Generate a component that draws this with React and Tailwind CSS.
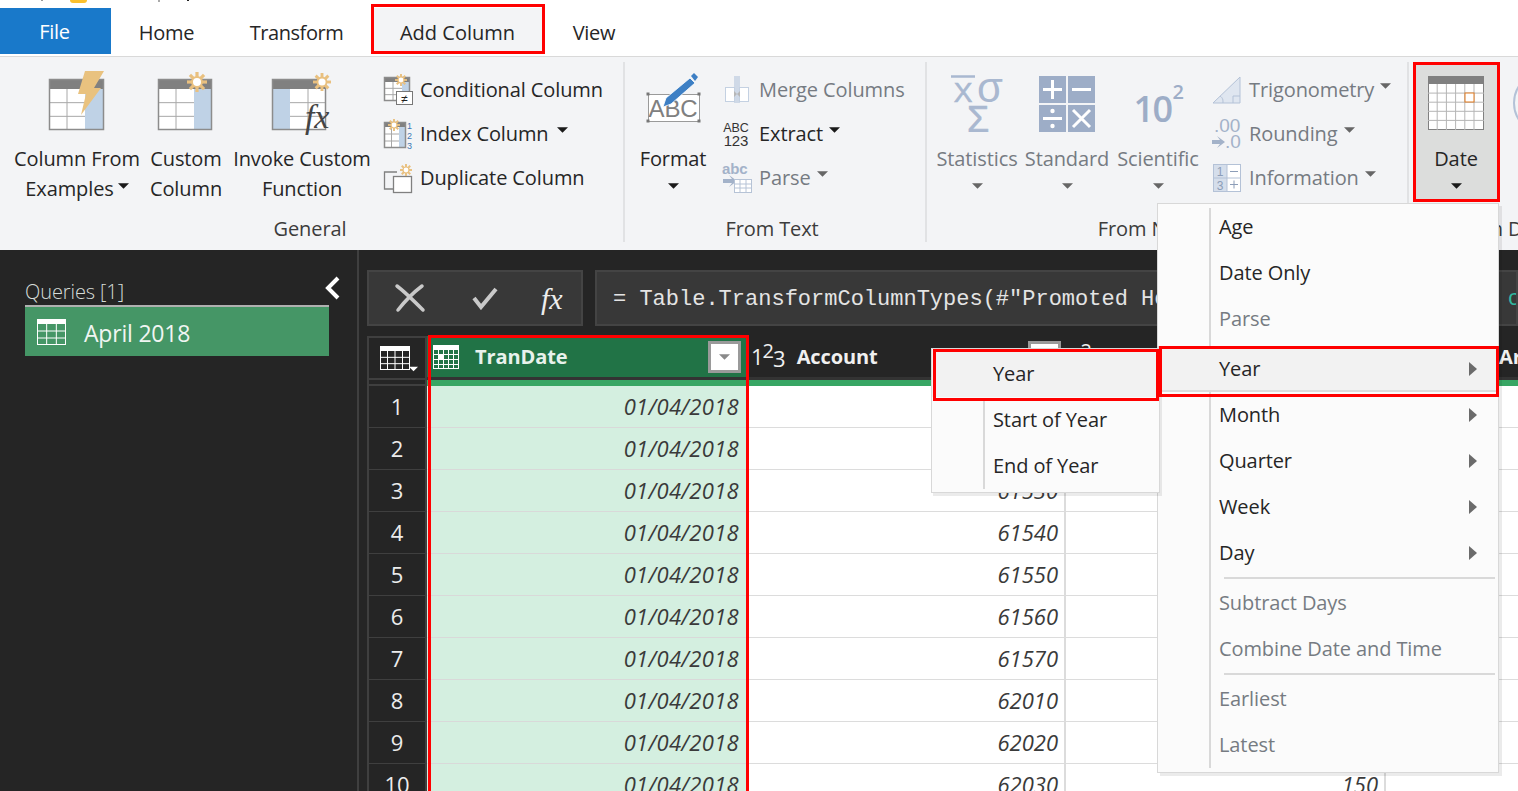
const ACCOUNTS = ['61510', '61520', '61530', '61540', '61550', '61560', '61570', '62010', '62020', '62030'];
const TEXT_DARK = 'text-[#262626]';
const TEXT_OFF = 'text-[#767b82]';

function Caret({ color = '#1a1a1a', className = '' }) {
  return (
    <svg width="11" height="6" viewBox="0 0 12 6" className={className}>
      <path d="M0 0h12L6 6z" fill={color} />
    </svg>
  );
}

function Sun({ cx, cy, r }) {
  const spokes = [0, 45, 90, 135];
  return (
    <g stroke="#e9c07f">
      {spokes.map((a) => {
        const dx = Math.cos((a * Math.PI) / 180) * r;
        const dy = Math.sin((a * Math.PI) / 180) * r;
        return <line key={a} x1={cx - dx} y1={cy - dy} x2={cx + dx} y2={cy + dy} strokeWidth={r * 0.32} />;
      })}
      <circle cx={cx} cy={cy} r={r * 0.5} fill="#fff" strokeWidth={r * 0.2} />
    </g>
  );
}

// table with a grey header and one blue column
function Sheet({ x, y, w, h, head, blue, blueW, rows = 3, cols = 2, strong = '#8c8c8c' }) {
  const gridX = blue === 'left' ? x + blueW : x;
  const gridW = w - blueW;
  const lines = [];
  for (let i = 1; i < rows; i++) {
    const ly = y + head + ((h - head) / rows) * i;
    lines.push(<line key={'r' + i} x1={gridX} y1={ly} x2={gridX + gridW} y2={ly} stroke="#a8a8a8" />);
  }
  for (let i = 1; i < cols; i++) {
    const lx = gridX + (gridW / cols) * i;
    lines.push(<line key={'c' + i} x1={lx} y1={y + head} x2={lx} y2={y + h} stroke="#a8a8a8" />);
  }
  return (
    <g>
      <rect x={x} y={y} width={w} height={h} fill="#fff" />
      <rect x={blue === 'left' ? x : x + w - blueW} y={y} width={blueW} height={h} fill="#bfd2e6" />
      {lines}
      <rect x={x} y={y} width={w} height={head} fill="#808080" />
      <rect x={x + 0.5} y={y + 0.5} width={w - 1} height={h - 1} fill="none" stroke={strong} strokeWidth="1.5" />
    </g>
  );
}

function FromExamplesIcon() {
  return (
    <svg width="58" height="62" viewBox="0 0 58 62">
      <Sheet x={1} y={9} w={55} h={51} head={10} blue="right" blueW={19} />
      <path d="M37 1h19L46 18h7L33 45l5-21h-8z" fill="#e9c27f" />
    </svg>
  );
}

function CustomIcon() {
  return (
    <svg width="58" height="62" viewBox="0 0 58 62">
      <Sheet x={1} y={9} w={54} h={51} head={10} blue="right" blueW={18} />
      <Sun cx={40} cy={12} r={10} />
    </svg>
  );
}

function InvokeIcon() {
  return (
    <svg width="60" height="62" viewBox="0 0 60 62" className="overflow-visible">
      <Sheet x={0} y={9} w={54} h={51} head={10} blue="left" blueW={18} />
      <Sun cx={50} cy={12} r={9} />
      <text x="33" y="58" fontFamily="Liberation Serif" fontStyle="italic" fontSize="34" fill="#444">fx</text>
    </svg>
  );
}

function CondIcon() {
  return (
    <svg width="30" height="32" viewBox="0 0 30 32">
      <Sheet x={1} y={3} w={26} h={24} head={5} blue="right" blueW={8} />
      <Sun cx={18} cy={6} r={6} />
      <rect x="13.5" y="17.5" width="16" height="13" fill="#fff" stroke="#777" />
      <text x="21.5" y="28.5" fontFamily="Liberation Sans" fontSize="12" textAnchor="middle" fill="#222">≠</text>
    </svg>
  );
}

function IndexIcon() {
  return (
    <svg width="30" height="32" viewBox="0 0 30 32">
      <Sheet x={1} y={4} w={22} h={26} head={5} blue="right" blueW={7} />
      <Sun cx={11} cy={7} r={6} />
      <text x="24" y="11" fontFamily="Liberation Sans" fontSize="9" fill="#3f78b5">1</text>
      <text x="24" y="21" fontFamily="Liberation Sans" fontSize="9" fill="#3f78b5">2</text>
      <text x="24" y="31" fontFamily="Liberation Sans" fontSize="9" fill="#3f78b5">3</text>
    </svg>
  );
}

function DuplicateIcon() {
  return (
    <svg width="30" height="32" viewBox="0 0 30 32">
      <path d="M14 10H1.5v17H10" fill="none" stroke="#808080" strokeWidth="1.3" />
      <rect x="10.5" y="14.5" width="18" height="16" fill="#fff" stroke="#808080" strokeWidth="1.3" />
      <Sun cx={23} cy={8} r={6} />
    </svg>
  );
}

function FormatIcon() {
  return (
    <svg width="58" height="54" viewBox="0 0 58 54" className="mb-[8px]">
      <rect x="4.5" y="24.5" width="51" height="27" fill="#fff" stroke="#9a9a9a" />
      {[[4, 24], [55, 24], [4, 51], [55, 51]].map(([x, y]) => (
        <rect key={x + '-' + y} x={x - 1.5} y={y - 1.5} width="3" height="3" fill="#777" />
      ))}
      <text x="29" y="47" fontFamily="Liberation Sans" fontSize="24" textAnchor="middle" fill="#808080">ABC</text>
      <path d="M19 37l3-9L46 8l5 5-24 21z" fill="#3d7fc4" stroke="#fff" strokeWidth="0.8" />
      <path d="M47 6l3-3 4 4-3 4z" fill="#3d7fc4" />
    </svg>
  );
}

function MergeIcon() {
  return (
    <svg width="30" height="30" viewBox="0 0 30 30">
      <rect x="12" y="1" width="6" height="27" fill="#cfd9e7" />
      <rect x="3.5" y="12.5" width="9" height="14" fill="#fff" stroke="#c4d1e2" />
      <rect x="17.5" y="12.5" width="9" height="14" fill="#fff" stroke="#c4d1e2" />
      <path d="M12 16l3 3-3 3zM18 16l-3 3 3 3z" fill="#b7b7b7" />
    </svg>
  );
}

function ExtractIcon() {
  return (
    <svg width="30" height="30" viewBox="0 0 30 30">
      <text x="14" y="13" fontFamily="Liberation Sans" fontSize="12.5" textAnchor="middle" fill="#333">ABC</text>
      <text x="14" y="27" fontFamily="Liberation Sans" fontSize="15" textAnchor="middle" fill="#333">123</text>
    </svg>
  );
}

function ParseIcon() {
  return (
    <svg width="32" height="32" viewBox="0 0 32 32">
      <text x="0" y="12" fontFamily="Liberation Sans" fontWeight="700" fontSize="15" fill="#a3b2c9">abc</text>
      <path d="M1 17h9l-3-4 8 6-8 6 3-4H1z" fill="#a3b2c9" />
      <rect x="12.5" y="17.5" width="17" height="13" fill="#fff" stroke="#b6c3d6" />
      <path d="M13 22h17M13 26h17M18 18v13M24 18v13" stroke="#b6c3d6" />
    </svg>
  );
}

function StatsIcon() {
  return (
    <svg width="56" height="57" viewBox="0 0 56 57">
      <line x1="2" y1="1.500" x2="26" y2="1.500" stroke="#a9b8d0" strokeWidth="2.500" />
      <text x="14" y="27" fontFamily="Liberation Sans" fontSize="28" textAnchor="middle" fill="#a9b8d0" stroke="#a9b8d0" strokeWidth="0.6">X</text>
      <text x="41" y="27" fontFamily="Liberation Sans" fontSize="42" textAnchor="middle" fill="#a9b8d0">σ</text>
      <text x="29" y="57" fontFamily="Liberation Sans" fontSize="36" textAnchor="middle" fill="#a9b8d0" stroke="#a9b8d0" strokeWidth="0.6">Σ</text>
    </svg>
  );
}

function StandardIcon() {
  return (
    <svg width="56" height="56" viewBox="0 0 56 56">
      <rect x="0" y="0" width="27" height="27" fill="#9dadc7" />
      <rect x="29" y="0" width="27" height="27" fill="#9dadc7" />
      <rect x="0" y="29" width="27" height="27" fill="#9dadc7" />
      <rect x="29" y="29" width="27" height="27" fill="#9dadc7" />
      <g stroke="#fff" strokeWidth="3">
        <path d="M4 13.500h19M13.500 4v19M33 13.500h19M4 42.500h19M34 34l17 17M51 34L34 51" />
      </g>
      <circle cx="13.500" cy="35" r="2.200" fill="#fff" />
      <circle cx="13.500" cy="50" r="2.200" fill="#fff" />
    </svg>
  );
}

function TrigIcon() {
  return (
    <svg width="30" height="30" viewBox="0 0 30 30">
      <path d="M1 28L28 2v26z" fill="#dfe6f0" stroke="#b4c2d7" />
      <path d="M21 28v-7h7M8 21c3 2 3 4 3 7" fill="none" stroke="#b4c2d7" />
    </svg>
  );
}

function RoundIcon() {
  return (
    <svg width="30" height="32" viewBox="0 0 30 32">
      <text x="2" y="14" fontFamily="Liberation Sans" fontSize="19" fill="#a3b2c9">.00</text>
      <text x="13" y="30" fontFamily="Liberation Sans" fontSize="19" fill="#a3b2c9">.0</text>
      <path d="M0 22h8l-3-4 8 6-8 6 3-4H0z" fill="#a3b2c9" />
    </svg>
  );
}

function InfoIcon() {
  return (
    <svg width="30" height="30" viewBox="0 0 30 30">
      <rect x="1.500" y="1.500" width="27" height="27" fill="#fff" stroke="#b4c2d7" />
      <rect x="2" y="2" width="13" height="26" fill="#d5deeb" />
      <path d="M2 15h27M15 2v27" stroke="#b4c2d7" />
      <text x="8" y="13" fontFamily="Liberation Sans" fontSize="12" textAnchor="middle" fill="#8c9db8">1</text>
      <text x="8" y="27" fontFamily="Liberation Sans" fontSize="12" textAnchor="middle" fill="#8c9db8">3</text>
      <path d="M18 8.500h8M18 21.500h8M22 17.500v8" stroke="#8c9db8" />
    </svg>
  );
}

function DateIcon() {
  const v = [1, 2, 3, 4, 5];
  const h = [1, 2, 3, 4];
  return (
    <svg width="56" height="54" viewBox="0 0 56 54" className="mb-[2px]">
      <rect x="0.500" y="0.500" width="55" height="53" fill="#fff" stroke="#808080" />
      {v.map((i) => (
        <line key={i} x1={i * 9.2} y1="8" x2={i * 9.2} y2="54" stroke="#b5b5b5" />
      ))}
      {h.map((i) => (
        <line key={i} x1="0" y1={8 + i * 9.100} x2="56" y2={8 + i * 9.100} stroke="#b5b5b5" />
      ))}
      <rect x="0" y="0" width="56" height="8" fill="#808080" />
      <rect x="37" y="17" width="9" height="9" fill="#fff" stroke="#e0781c" />
    </svg>
  );
}

function GridIcon({ line = '#fff', fill = 'none', w = 30, h = 24, cols = 3, rows = 3, head = 5 }) {
  const out = [];
  for (let i = 1; i < cols; i++) out.push(<line key={'c' + i} x1={(w / cols) * i} y1="0" x2={(w / cols) * i} y2={h} stroke={line} />);
  for (let i = 1; i < rows; i++) {
    const y = head + ((h - head) / rows) * i;
    out.push(<line key={'r' + i} x1="0" y1={y} x2={w} y2={y} stroke={line} />);
  }
  return (
    <svg width={w} height={h} viewBox={`0 0 ${w} ${h}`}>
      <rect x="0.500" y="0.500" width={w - 1} height={h - 1} fill={fill} stroke={line} />
      {out}
      <rect x="0" y="0" width={w} height={head} fill={line} />
    </svg>
  );
}

function CalendarHeadIcon() {
  return (
    <svg width="26" height="24" viewBox="0 0 26 24">
      <rect x="0.500" y="0.500" width="25" height="23" fill="#217346" stroke="#fff" />
      <path d="M5.500 5v19M10.500 5v19M15.500 5v19M20.500 5v19M0 9.500h26M0 14.500h26M0 19.500h26" stroke="#fff" />
      <rect x="0" y="0" width="26" height="5" fill="#fff" />
      <rect x="5" y="9" width="6" height="6" fill="#fff" />
    </svg>
  );
}

function BigButton({ lines, icon, off, caret, width, className = '' }) {
  return (
    <div className={`flex flex-col items-center shrink-0 ${className}`} style={{ width }}>
      <div className="h-[82px] flex items-end justify-center pb-[12px]">{icon}</div>
      {lines.map((l, i) => (
        <div key={i} className={`h-[30px] leading-[30px] whitespace-nowrap ${off ? TEXT_OFF : TEXT_DARK}`}>
          {l}
          {caret === 'inline' && i === lines.length - 1 ? <Caret className="inline-block ml-[4px] mb-[9px]" /> : null}
        </div>
      ))}
      {caret === 'below' ? <Caret className="mt-[9px]" color={off ? '#666' : '#1a1a1a'} /> : null}
    </div>
  );
}

function SmallRow({ icon, text, off, caret, iconW = 37 }) {
  return (
    <div className="h-[44px] flex items-center whitespace-nowrap">
      <div className="shrink-0 flex items-center" style={{ width: iconW }}>{icon}</div>
      <span className={off ? TEXT_OFF : TEXT_DARK}>{text}</span>
      {caret ? <Caret className="mb-[8px]" color={off ? '#666' : '#1a1a1a'} /> : null}
    </div>
  );
}

function Group({ label, width, children, border = true, labelClass = '' }) {
  return (
    <div className={`shrink-0 h-[180px] flex flex-col justify-between ${border ? 'border-r-2 border-[#e1e2e4]' : ''}`} style={{ width }}>
      <div className="flex">{children}</div>
      <div className={`h-[26px] leading-[26px] text-center text-[#3c3c3c] whitespace-nowrap ${labelClass}`}>{label}</div>
    </div>
  );
}

function Ribbon() {
  return (
    <div className="h-[194px] bg-[#f3f4f6] border-t border-[#d9d9d9] pt-[5px] flex overflow-hidden text-[20px] tracking-[-0.1px]">
      <Group label="General" width={625} labelClass="pr-[3px]">
        <BigButton width={130} className="ml-[12px]" lines={['Column From', 'Examples']} caret="inline" icon={<FromExamplesIcon />} />
        <BigButton width={80} className="ml-[4px]" lines={['Custom', 'Column']} icon={<CustomIcon />} />
        <BigButton width={140} className="ml-[6px]" lines={['Invoke Custom', 'Function']} icon={<InvokeIcon />} />
        <div className="ml-[11px] pt-[6px] [&>div>span]:mr-[8px]">
          <SmallRow icon={<CondIcon />} text="Conditional Column" />
          <SmallRow icon={<IndexIcon />} text="Index Column" caret />
          <SmallRow icon={<DuplicateIcon />} text="Duplicate Column" />
        </div>
      </Group>
      <Group label="From Text" width={302} labelClass="pr-[6px]">
        <BigButton width={90} className="ml-[3px]" lines={['Format']} caret="below" icon={<FormatIcon />} />
        <div className="ml-[4px] pt-[6px] [&>div>span]:mr-[6px]">
          <SmallRow icon={<MergeIcon />} text="Merge Columns" off />
          <SmallRow icon={<ExtractIcon />} text="Extract" caret />
          <SmallRow icon={<ParseIcon />} text="Parse" off caret />
        </div>
      </Group>
      <Group label="From Number" width={482} labelClass="pr-[8px]">
        <BigButton width={80} className="ml-[10px]" off lines={['Statistics']} caret="below" icon={<StatsIcon />} />
        <BigButton width={82} className="ml-[9px]" off lines={['Standard']} caret="below" icon={<StandardIcon />} />
        <BigButton
          width={84}
          className="ml-[8px]"
          off
          lines={['Scientific']}
          caret="below"
          icon={
            <div className="font-semibold text-[#9dadc7] text-[36px] leading-[38px] mb-[4px] tracking-[-1.5px]">
              10<sup className="text-[20px] font-semibold align-[13px] ml-[1px] leading-none">2</sup>
            </div>
          }
        />
        <div className="ml-[12px] pt-[6px] [&>div>span]:mr-[6px]">
          <SmallRow icon={<TrigIcon />} text="Trigonometry" off caret />
          <SmallRow icon={<RoundIcon />} text="Rounding" off caret />
          <SmallRow icon={<InfoIcon />} text="Information" off caret />
        </div>
      </Group>
      <Group label="From Date & Time" width={258} border={false}>
        <div className="ml-[5px] w-[86px] h-[139px] bg-[#dcdddc] shrink-0 -translate-x-[1px]">
          <BigButton width={86} lines={['Date']} caret="below" icon={<DateIcon />} />
        </div>
        <div className="ml-[13px] mt-[9px] w-[64px] h-[64px] rounded-full border-2 border-[#b4c2d7] shrink-0" />
      </Group>
    </div>
  );
}

function TabBar() {
  const tabs = [
    { label: 'Home', w: 'w-[111px]' },
    { label: 'Transform', w: 'w-[149px]', cls: 'tracking-[-0.45px]' },
    { label: 'Add Column', w: 'w-[173px]', active: true, cls: 'tracking-[0px]' },
    { label: 'View', w: 'w-[100px]' },
  ];
  return (
    <div className="h-[56px] bg-white">
      <div className="h-[8px] flex items-start">
        <span className="ml-[41px] w-[2px] h-[1px] bg-[#999]" />
        <span className="ml-[27px] w-[17px] h-[3px] bg-[#fbc02d] rounded-b-full" />
        <span className="ml-[71px] w-[2px] h-[2px] bg-[#aaa]" />
        <span className="ml-[27px] w-[2px] h-[1px] bg-[#222]" />
      </div>
      <div className="flex h-[48px] text-[20px] tracking-[-0.25px]">
        <div className="w-[111px] h-[46px] bg-[#1979ca] text-white flex items-center justify-center pt-[2px] pr-[2px]">File</div>
        {tabs.map((t) => (
          <div key={t.label} className={`${t.w} ${t.active ? 'bg-[#f3f4f6]' : ''} ${t.cls || ''} flex items-center justify-center ${TEXT_DARK} h-[46px] pt-[3px]`}>
            {t.label}
          </div>
        ))}
      </div>
    </div>
  );
}

function Sidebar() {
  return (
    <div className="w-[359px] shrink-0 border-r-2 border-[#3f3f3f] px-[25px] pt-[27px] relative">
      <div className="w-[304px] h-[30px] leading-[30px] text-[20px] font-light text-[#d5dcd8] border-b-2 border-[#b0b0b0] tracking-[-0.1px]">Queries [1]</div>
      <div className="w-[304px] h-[49px] bg-[#459666] text-[#f0f5f2] text-[23px] flex items-center gap-[18px] pl-[12px]">
        <GridIcon w={29} h={26} />
        <span className="tracking-[-0.2px] pt-[3px]">April 2018</span>
      </div>
      <svg width="16" height="24" viewBox="0 0 16 24" className="absolute right-[16px] top-[26px]">
        <path d="M13 2L3 12l10 10" fill="none" stroke="#fff" strokeWidth="4" />
      </svg>
    </div>
  );
}

function FormulaBar() {
  return (
    <div className="flex gap-[12px] h-[56px]">
      <div className="w-[216px] shrink-0 bg-[#383838] border-2 border-[#444] flex items-center">
        <svg width="32" height="30" viewBox="0 0 32 30" className="ml-[25px]">
          <path d="M3 3c8 6 18 16 26 24M28 3C20 9 11 18 4 27" fill="none" stroke="#c9c9c9" strokeWidth="3.500" strokeLinecap="round" />
        </svg>
        <svg width="26" height="24" viewBox="0 0 26 24" className="ml-[46px]">
          <path d="M2 12l7 9L24 3" fill="none" stroke="#c9c9c9" strokeWidth="4" />
        </svg>
        <span className="ml-[43px] font-['Liberation_Serif',serif] italic text-[30px] text-[#eee]">fx</span>
      </div>
      <div className="flex-1 min-w-0 bg-[#383838] border-2 border-[#444] flex items-center pl-[16px] pt-[3px] font-['Liberation_Mono',monospace] text-[22px] text-[#e4e4e4] whitespace-pre overflow-hidden">
        <span>= Table.TransformColumnTypes(#"Promoted Headers"</span>
        <span className="ml-auto -mr-[5px] text-[#2fb8a0]">c</span>
      </div>
    </div>
  );
}

function FilterBtn({ className = '' }) {
  return (
    <div className={`w-[33px] h-[32px] bg-white border-[3px] border-[#9a9a9a] flex items-center justify-center shrink-0 ${className}`}>
      <Caret color="#8a8a8a" />
    </div>
  );
}

function NumIcon() {
  return (
    <span className="text-[#f0f0f0] font-normal text-[22px] leading-none whitespace-nowrap tracking-[-1px]">
      1<span className="relative -top-[7px] text-[20px]">2</span>
      <span className="relative top-[2px]">3</span>
    </span>
  );
}

function DataGrid() {
  return (
    <div className="mt-[10px] text-[20px] w-[1160px]">
      <div className="grid grid-cols-[60px_321px_318px_320px_141px] h-[44px] font-bold tracking-[-0.1px]">
        <div className="bg-[#252525] border-2 border-[#3f3f3f] flex items-center pl-[11px] relative">
          <GridIcon w={30} h={24} cols={4} rows={3} />
          <Caret color="#fff" className="absolute left-[40px] top-[28px] w-[9px]" />
        </div>
        <div className="bg-[#217346] border-b-[3px] border-[#333] flex items-center pl-[6px] pr-[7px] text-[#e8f2ec]">
          <CalendarHeadIcon />
          <span className="ml-[16px] flex-1">TranDate</span>
          <FilterBtn />
        </div>
        <div className="bg-[#252525] border-b-[3px] border-[#333] flex items-center pl-[3px] pr-[5px] text-[#f0f0f0]">
          <NumIcon />
          <span className="ml-[12px] flex-1">Account</span>
          <FilterBtn />
        </div>
        <div className="bg-[#252525] border-b-[3px] border-[#333] flex items-center pl-[3px] pr-[5px] text-[#f0f0f0]">
          <NumIcon />
        </div>
        <div className="bg-[#252525] border-b-[3px] border-[#333] flex items-center pl-[113px] text-[#f0f0f0] overflow-hidden">Ar</div>
      </div>
      <div className="grid grid-cols-[60px_1100px] h-[6px]">
        <div className="border-x-2 border-b-2 border-[#3f3f3f]" />
        <div className="bg-[#38a664]" />
      </div>
      {ACCOUNTS.map((acc, i) => (
        <div key={acc} className="grid grid-cols-[60px_321px_318px_320px_141px] h-[42px] italic text-[22px] text-[#3a3a3a] leading-[41px]">
          <div className="bg-[#252525] border-x-2 border-b-2 border-[#3f3f3f] not-italic text-[#ececec] text-center">{i + 1}</div>
          <div className="bg-[#d4efe0] border-b-2 border-[#d9d9d9] text-right pr-[9px] tracking-[0.3px]">01/04/2018</div>
          <div className="bg-white border-b-2 border-r-2 border-[#dcdcdc] text-right pr-[6px]">{acc}</div>
          <div className="bg-white border-b-2 border-r-2 border-[#dcdcdc] text-right pr-[6px]">{i === 9 ? '150' : ''}</div>
          <div className="bg-white border-b-2 border-[#dcdcdc]" />
        </div>
      ))}
    </div>
  );
}

function MenuItem({ text, off, arrow, hi, className = '' }) {
  return (
    <div
      className={`h-[46px] flex items-center pl-[61px] pr-[21px] justify-between ${off ? TEXT_OFF : TEXT_DARK} ${
        hi ? 'bg-[#f2f2f2] border-y-2 border-[#dcdcdc]' : ''
      } ${className}`}
    >
      <span>{text}</span>
      {arrow ? (
        <svg width="8" height="14" viewBox="0 0 8 14">
          <path d="M0 0l8 7-8 7z" fill="#6b6b6b" />
        </svg>
      ) : null}
    </div>
  );
}

function DateMenu() {
  return (
    <div className="absolute left-[1157px] top-[203px] w-[342px] h-[570px] bg-[#fbfbfb] border border-[#d8d8d8] shadow-[3px_3px_0_rgba(0,0,0,0.08)] text-[20px] tracking-[-0.1px]">
      <div className="absolute left-[51px] top-[4px] bottom-[4px] w-[2px] bg-[#d9d9d9]" />
      <div className="relative">
        <MenuItem text="Age" />
        <MenuItem text="Date Only" />
        <MenuItem text="Parse" off />
        <MenuItem text="Year" arrow hi className="mt-[4px]" />
        <MenuItem text="Month" arrow />
        <MenuItem text="Quarter" arrow />
        <MenuItem text="Week" arrow />
        <MenuItem text="Day" arrow />
        <div className="ml-[66px] mr-[3px] h-[2px] my-[1px] bg-[#d9d9d9]" />
        <MenuItem text="Subtract Days" off />
        <MenuItem text="Combine Date and Time" off />
        <div className="ml-[66px] mr-[3px] h-[2px] my-[1px] bg-[#d9d9d9]" />
        <MenuItem text="Earliest" off />
        <MenuItem text="Latest" off />
      </div>
    </div>
  );
}

function YearMenu() {
  return (
    <div className="absolute left-[931px] top-[348px] w-[229px] h-[145px] bg-[#fbfbfb] border border-[#d8d8d8] shadow-[2px_3px_0_rgba(0,0,0,0.08)] text-[20px] tracking-[-0.1px] pt-[1px]">
      <div className="absolute left-[51px] top-[50px] bottom-[3px] w-[2px] bg-[#d9d9d9]" />
      <MenuItem text="Year" className="bg-[#f2f2f2] h-[47px]" />
      <MenuItem text="Start of Year" />
      <MenuItem text="End of Year" />
    </div>
  );
}

function RedBox({ className }) {
  return <div className={`absolute border-[3px] border-[#f00] pointer-events-none ${className}`} />;
}

export default function App() {
  return (
    <div className="relative w-[1518px] h-[791px] overflow-hidden bg-[#252525] font-['Open_Sans',sans-serif]">
      <TabBar />
      <Ribbon />
      <div className="flex h-[541px]">
        <Sidebar />
        <div className="pl-[8px] pt-[20px] flex-1 min-w-0">
          <FormulaBar />
          <DataGrid />
        </div>
      </div>
      <DateMenu />
      <YearMenu />
      <RedBox className="left-[371px] top-[4px] w-[174px] h-[50px]" />
      <RedBox className="left-[1413px] top-[62px] w-[87px] h-[140px]" />
      <RedBox className="left-[428px] top-[335px] w-[321px] h-[470px]" />
      <RedBox className="left-[1159px] top-[346px] w-[340px] h-[51px]" />
      <RedBox className="left-[933px] top-[349px] w-[226px] h-[52px]" />
    </div>
  );
}
